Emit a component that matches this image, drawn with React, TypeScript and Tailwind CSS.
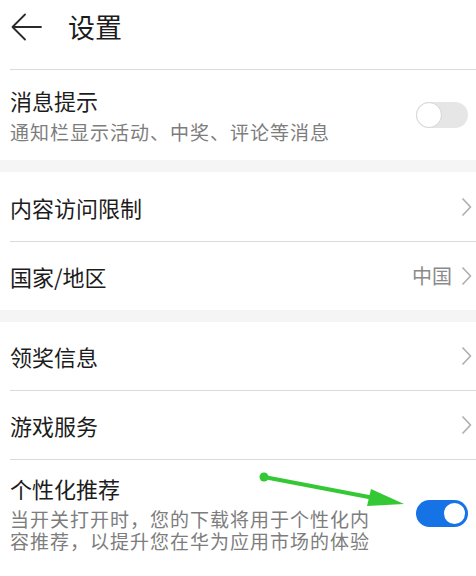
import React from 'react';

const Chevron = () => (
  <svg width="11" height="20" viewBox="0 0 11 20" className="shrink-0">
    <polyline points="1.5,1.5 9.5,10 1.5,18.5" fill="none" stroke="#b0b0b0" strokeWidth="1.7" strokeLinejoin="round" />
  </svg>
);

function Toggle({ on }: { on: boolean }) {
  return on ? (
    <div className="w-[52px] h-[27px] rounded-full bg-[#1673e6] flex items-center justify-end pr-[3px] shrink-0">
      <div className="w-[21px] h-[21px] rounded-full bg-white" />
    </div>
  ) : (
    <div className="w-[52px] h-[26px] rounded-full bg-[#e6e6e6] flex items-center shrink-0">
      <div className="w-[26px] h-[26px] rounded-full bg-white border border-[#d6d6d6]" />
    </div>
  );
}

function LinkRow({ label, value, h }: { label: string; value?: string; h: string }) {
  return (
    <div className={`${h} flex items-center justify-between pl-[10px] pr-[4px]`}>
      <span className="text-[22px] leading-[26px] text-[#1c1c1c]">{label}</span>
      <div className="flex items-center gap-[9px]">
        {value && <span className="text-[20px] leading-[24px] text-[#8a8a8a]">{value}</span>}
        <Chevron />
      </div>
    </div>
  );
}

const Divider = () => <div className="ml-[10px] h-px bg-[#dadada]" />;
const Band = () => <div className="h-[12px] bg-[#f5f5f5]" />;

export default function App() {
  return (
    <div
      className="relative w-[476px] h-[576px] overflow-hidden bg-white"
      style={{ fontFamily: '"Noto Sans CJK SC", "Noto Sans", sans-serif' }}
    >
      {/* header */}
      <div className="h-[69px] flex items-start pt-[13px] pl-[11px]">
        <svg width="32" height="28" viewBox="0 0 32 28">
          <path d="M30 14 H2 M14 1.5 L1.5 14 L14 26.5" fill="none" stroke="#2a2a2a" strokeWidth="1.8" strokeLinecap="round" strokeLinejoin="round" />
        </svg>
        <span className="ml-[25px] text-[27px] leading-[28px] text-[#1c1c1c]">设置</span>
      </div>
      <Divider />

      <div className="h-[90px] flex items-center justify-between pl-[10px] pr-[8px]">
        <div className="flex flex-col">
          <span className="text-[22px] leading-[26px] text-[#1c1c1c]">消息提示</span>
          <span className="mt-[7px] text-[19px] leading-[24px] tracking-[1px] text-[#7d7d7d]">
            通知栏显示活动、中奖、评论等消息
          </span>
        </div>
        <Toggle on={false} />
      </div>
      <Band />

      <LinkRow label="内容访问限制" h="h-[69px]" />
      <Divider />
      <LinkRow label="国家/地区" value="中国" h="h-[68px]" />
      <Band />

      <LinkRow label="领奖信息" h="h-[68px]" />
      <Divider />
      <LinkRow label="游戏服务" h="h-[68px]" />
      <Divider />

      <div className="flex items-center justify-between pl-[10px] pr-[8px] pt-[15px]">
        <div className="flex flex-col">
          <span className="text-[22px] leading-[26px] text-[#1c1c1c]">个性化推荐</span>
          <span className="mt-[7px] w-[372px] text-[19px] leading-[22px] tracking-[1px] text-[#7d7d7d]">
            当开关打开时，您的下载将用于个性化内容推荐，以提升您在华为应用市场的体验
          </span>
        </div>
        <Toggle on={true} />
      </div>

      {/* green annotation arrow */}
      <svg className="absolute left-0 top-0 pointer-events-none" width="476" height="576">
        <line x1="264" y1="477" x2="374" y2="498" stroke="#34c934" strokeWidth="4" strokeLinecap="round" />
        <circle cx="264" cy="477" r="4.5" fill="#34c934" />
        <polygon points="404,504 367,506 371,489" fill="#34c934" />
      </svg>
    </div>
  );
}
